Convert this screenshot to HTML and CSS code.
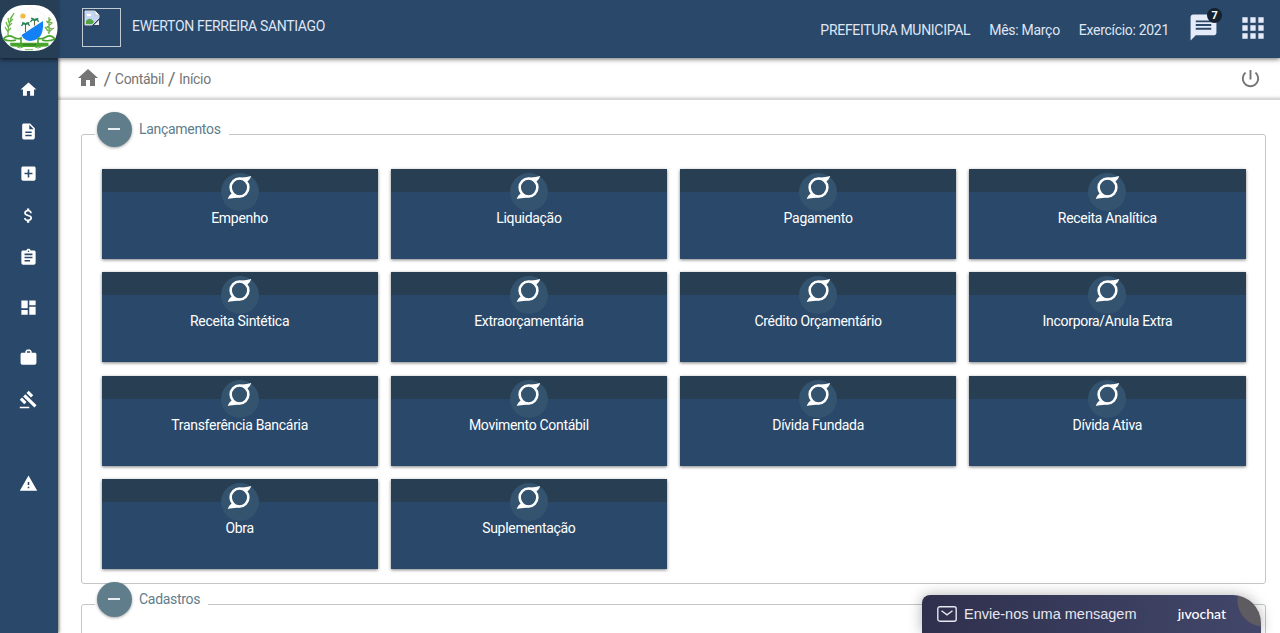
FILE: index.html
```html
<!DOCTYPE html>
<html lang="pt-BR">
<head>
<meta charset="utf-8">
<title>Contábil</title>
<link rel="stylesheet" href="styles.css">
</head>
<body>
<svg class="defs" width="0" height="0">
  <symbol id="ring" viewBox="0 0 26 26"><ellipse cx="13" cy="13" rx="9.200" ry="9.400" fill="none" stroke="#fff" stroke-width="2.700"/><path fill="#fff" d="M9 4.200C12 2 19 2.800 25.200 1 24.400 3.600 22.600 5.800 20.600 7.200 18 5 14 3.600 9 4.200zM17 21.800C14 24 7 23.200.8 25 1.600 22.400 3.400 20.200 5.400 18.800 8 21 12 22.400 17 21.800z"/></symbol>
  <symbol id="home" viewBox="0 0 24 24"><path d="M10 20v-6h4v6h5v-8h3L12 3 2 12h3v8z"/></symbol>
</svg>
<div class="app">
  <header class="topbar">
    <div class="brand">
      <svg width="58" height="52" viewBox="0 0 58 52">
        <rect x="1" y="1" width="56.500" height="46" rx="23" ry="22" fill="#fff"/>
        <path d="M20 9l11-6 13 7v19L31 40 20 31z" fill="#fdfdfd" stroke="#ececec" stroke-width=".5"/>
        <circle cx="23" cy="12" r="2.600" fill="#f4b942"/>
        <path d="M43 17Q44 30 38 34.500Q32 38.500 26 36Q22.500 34 21.500 31z" fill="#1480f5"/>
        <path d="M25.500 20v8M34.500 16v5.500" stroke="#6b6b3a" stroke-width="1.100" fill="none"/>
        <path d="M21.500 22q2-3.500 4-1.500q3-2 4 1.500M22 19q3-.5 3.500 1.500q1.500-2.500 4-1.500M30.500 18q2-3.500 4-1.500q3-2 4 1.500M31 14.500q3-.5 3.500 2q1.500-2.500 4-1.500" stroke="#238052" stroke-width="1.300" fill="none"/>
        <path d="M14 9Q8 18 8 31M13 11l-3 4M13 15l-4 4M12 19l-4 4M11 24l-3 3M8 14l1 5M6 18l2 5M5 23l3 5" stroke="#6bb94a" stroke-width="1.300" fill="none"/>
        <path d="M49 13v17M46 17l6 2-5 4 5 2-4 4M51 15l-4 4M54 24l-5 3M45 23l3 4" stroke="#72b14a" stroke-width="1.300" fill="none"/>
        <path d="M3 35q5-5 10-2q5 3 8 1v5M55 35q-4-5-9-2q-5 3-8 1v5M3 35q6 3 13 1M55 35q-6 3-13 1" stroke="#48a52b" stroke-width="1.600" fill="none"/>
        <path d="M10 38.700h38.500v3.300q-3 1-19 1t-19-1z" fill="#48a52b"/>
        <path d="M23 40.800h13" stroke="#2d7420" stroke-width="1"/>
        <path d="M17 43q3 2 6 0M35 43q3 2 6 0M25 45.700h8" stroke="#6fb955" fill="none"/>
      </svg>
    </div>
    <div class="avatar">
      <svg width="16" height="16" viewBox="0 0 16 16"><path d="M1 1h10l4 4v3L8 15H1z" fill="#c3d7f4" stroke="#d3d6da"/><path d="M11 1v4h4" fill="#fff" stroke="#c3c7cb"/><path d="M2 14v-3q4-5 8 1l-2 2z" fill="#54a43f"/><ellipse cx="5" cy="5" rx="2.300" ry="1.300" fill="#fff"/><path d="M15 10v5h-5z" fill="#e8eaec"/></svg>
    </div>
    <div class="user">EWERTON FERREIRA SANTIAGO</div>
    <div class="info"><span>PREFEITURA MUNICIPAL</span><span>Mês: Março</span><span>Exercício: 2021</span></div>
    <div class="chat">
      <svg width="31" height="31" viewBox="0 0 24 24"><path fill="#e6ebfa" d="M20 2H4c-1.100 0-2 .9-2 2v18l4-4h14c1.100 0 2-.9 2-2V4c0-1.100-.9-2-2-2zM6 6.500h12v1.500H6zM6 9.300h12v1.500H6zM6 12.200h12v1.500H6z" fill-rule="evenodd"/></svg>
      <span class="badge">7</span>
    </div>
    <svg class="apps" width="32" height="32" viewBox="0 0 24 24"><path fill="#e6ebfa" d="M4 8h4V4H4zM10 20h4v-4h-4zM4 20h4v-4H4zM4 14h4v-4H4zM10 14h4v-4h-4zM16 4v4h4V4zM10 8h4V4h-4zM16 14h4v-4h-4zM16 20h4v-4h-4z"/></svg>
  </header>
  <nav class="side">
    <svg viewBox="0 0 24 24"><use href="#home"/></svg>
    <svg viewBox="0 0 24 24"><path d="M14 2H6c-1.100 0-2 .9-2 2v16c0 1.100.9 2 2 2h12c1.100 0 2-.9 2-2V8zM16 18H8v-2h8zM16 14H8v-2h8zM13 9V3.500L18.500 9z"/></svg>
    <svg viewBox="0 0 24 24"><path d="M19 3H5c-1.100 0-2 .9-2 2v14c0 1.100.9 2 2 2h14c1.100 0 2-.9 2-2V5c0-1.100-.9-2-2-2zM17 13h-4v4h-2v-4H7v-2h4V7h2v4h4z"/></svg>
    <svg viewBox="0 0 24 24"><path d="M11.800 10.900c-2.270-.59-3-1.200-3-2.150 0-1.090 1.010-1.850 2.700-1.850 1.780 0 2.440.85 2.500 2.100h2.210c-.07-1.720-1.120-3.300-3.210-3.810V3h-3v2.160c-1.940.42-3.500 1.680-3.500 3.610 0 2.310 1.910 3.460 4.700 4.130 2.500.6 3 1.480 3 2.410 0 .69-.49 1.790-2.700 1.790-2.060 0-2.870-.92-2.980-2.100h-2.200c.12 2.190 1.760 3.420 3.680 3.830V21h3v-2.150c1.950-.37 3.500-1.500 3.500-3.550 0-2.840-2.430-3.810-4.700-4.400z"/></svg>
    <svg viewBox="0 0 24 24"><path d="M19 3h-4.180C14.400 1.840 13.300 1 12 1s-2.400.84-2.820 2H5c-1.100 0-2 .9-2 2v14c0 1.100.9 2 2 2h14c1.100 0 2-.9 2-2V5c0-1.100-.9-2-2-2zM12 3c.55 0 1 .45 1 1s-.45 1-1 1-1-.45-1-1 .45-1 1-1zM14 17H7v-2h7zM17 13H7v-2h10zM17 9H7V7h10z"/></svg>
    <svg class="wide" viewBox="0 0 24 24"><path d="M3 13h8V3H3zM3 21h8v-6H3zM13 21h8V11h-8zM13 3v6h8V3z"/></svg>
    <svg class="wide" viewBox="0 0 24 24"><path d="M20 6h-4V4l-2-2h-4L8 4v2H4c-1.100 0-2 .9-2 2v11c0 1.100.9 2 2 2h16c1.100 0 2-.9 2-2V8c0-1.100-.9-2-2-2zM14 6h-4V4h4z"/></svg>
    <svg viewBox="0 0 24 24"><path d="M1 21h12v2H1zM5.240 8.070l2.830-2.830 14.140 14.140-2.830 2.830zM12.320 1l5.660 5.660-2.830 2.830-5.660-5.660zM3.830 9.480l5.660 5.660-2.830 2.830L1 12.310z"/></svg>
    <svg class="last" viewBox="0 0 24 24"><path d="M1 21h22L12 2zM13 18h-2v-2h2zM13 14h-2v-4h2z"/></svg>
  </nav>
  <div class="crumbs">
    <svg class="chome" width="24" height="24" viewBox="0 0 24 24"><use href="#home"/></svg>
    <span class="slash">/</span><span class="crumb">Contábil</span><span class="slash">/</span><span class="crumb">Início</span>
    <svg class="power" width="23" height="23" viewBox="0 0 24 24"><path d="M13 3h-2v10h2zM17.830 5.170l-1.420 1.420C17.990 7.860 19 9.810 19 12c0 3.870-3.130 7-7 7s-7-3.130-7-7c0-2.190 1.010-4.140 2.580-5.420L6.170 5.170C4.230 6.820 3 9.260 3 12c0 4.970 4.030 9 9 9s9-4.030 9-9c0-2.740-1.230-5.180-3.170-6.830z"/></svg>
  </div>
  <main class="content">
    <section class="group">
      <h2 class="legend"><i class="toggle"></i>Lançamentos</h2>
      <div class="cards">
        <a class="card"><span class="dot"><svg><use href="#ring"/></svg></span>Empenho</a>
        <a class="card"><span class="dot"><svg><use href="#ring"/></svg></span>Liquidação</a>
        <a class="card"><span class="dot"><svg><use href="#ring"/></svg></span>Pagamento</a>
        <a class="card"><span class="dot"><svg><use href="#ring"/></svg></span>Receita Analítica</a>
        <a class="card"><span class="dot"><svg><use href="#ring"/></svg></span>Receita Sintética</a>
        <a class="card"><span class="dot"><svg><use href="#ring"/></svg></span>Extraorçamentária</a>
        <a class="card"><span class="dot"><svg><use href="#ring"/></svg></span>Crédito Orçamentário</a>
        <a class="card"><span class="dot"><svg><use href="#ring"/></svg></span>Incorpora/Anula Extra</a>
        <a class="card"><span class="dot"><svg><use href="#ring"/></svg></span>Transferência Bancária</a>
        <a class="card"><span class="dot"><svg><use href="#ring"/></svg></span>Movimento Contábil</a>
        <a class="card"><span class="dot"><svg><use href="#ring"/></svg></span>Dívida Fundada</a>
        <a class="card"><span class="dot"><svg><use href="#ring"/></svg></span>Dívida Ativa</a>
        <a class="card"><span class="dot"><svg><use href="#ring"/></svg></span>Obra</a>
        <a class="card"><span class="dot"><svg><use href="#ring"/></svg></span>Suplementação</a>
      </div>
    </section>
    <section class="group next">
      <h2 class="legend"><i class="toggle"></i>Cadastros</h2>
    </section>
  </main>
</div>
<div class="jivo">
  <svg width="20" height="16" viewBox="0 0 20 16"><rect x=".8" y=".8" width="18.400" height="14.400" rx="2" fill="none" stroke="#e6e7f0" stroke-width="1.400"/><path d="M4.500 4.800l5.500 4 5.500-4" fill="none" stroke="#e6e7f0" stroke-width="1.400"/></svg>
  <span class="msg">Envie-nos uma mensagem</span>
  <span class="logo">jıvochat</span>
</div>
</body>
</html>
```
FILE: styles.css
```css
* { box-sizing: border-box; }
body { margin: 0; height: 633px; overflow: hidden; background: #fff; font: 14px Roboto, sans-serif; letter-spacing: -.3px; }
.defs { position: absolute; }
.app { display: grid; grid-template: 58px 42px 533px / 58px 1fr; height: 633px; overflow: hidden; }

.topbar { grid-column: 1 / 3; display: flex; background: #2a4869; color: #dfe6f5; box-shadow: 0 1px 5px rgba(0,0,0,.6); z-index: 3; }
.brand { width: 58px; height: 58px; padding-top: 4px; background: #273f55; box-shadow: 0 0 4px rgba(0,0,0,.3); }
.avatar { width: 39px; height: 39px; margin: 8px 0 0 24px; border: 1px solid #c3cad2; padding: 1px; }
.user { margin: 17px auto 0 11px; line-height: 18px; letter-spacing: -.33px; }
.info { display: flex; gap: 19px; margin-top: 21px; line-height: 18px; }
.chat { position: relative; margin: 12px 0 0 19px; width: 31px; height: 31px; }
.badge { position: absolute; left: 19px; top: -4px; width: 15px; height: 15px; border-radius: 50%; background: #14212e; color: #fff; font-size: 11px; font-weight: 700; line-height: 15px; text-align: center; }
.apps { margin: 12px 11px 0 18px; }

.side { grid-row: 2 / 4; display: flex; flex-direction: column; align-items: center; padding: 21.500px 1px 0 0; background: #2a4869; box-shadow: 1px 0 3px rgba(0,0,0,.6); z-index: 2; }
.side svg { width: 19px; height: 19px; margin-bottom: 23px; fill: #fff; flex: none; }
.side svg:nth-child(5), .side .wide { margin-bottom: 31px; }
.side .wide + .wide { margin-bottom: 23px; }
.side .last { margin-top: 42px; }

.crumbs { display: flex; align-items: center; padding: 0 18px; color: #757575; border-bottom: 2px solid #d8d8d8; box-shadow: inset 0 -3px 3px -2px rgba(0,0,0,.13); }
.crumbs svg { fill: #757575; }
.crumb { padding-top: 2px; }
.slash { font-size: 19px; margin: 0 3.800px 0 3.500px; }
.power { margin-left: auto; }

.content { padding: 34px 14px 0 23px; min-width: 0; overflow: hidden; }
.group { height: 450px; border: 1px solid #c2c6c8; border-radius: 3px; padding: 0 19.500px; }
.next { margin-top: 20px; }
.legend { display: flex; align-items: center; gap: 7.500px; width: max-content; height: 35px; margin: -23.500px 0 0 -6.500px; padding: 0 8px 0 1.500px; background: linear-gradient(#fff, #fff) 0 20px / 100% 8px no-repeat; font-size: 14px; font-weight: 400; color: #607d8b; }
.toggle { display: flex; align-items: center; justify-content: center; width: 35px; height: 35px; border-radius: 50%; background: #607d8b; box-shadow: 0 1px 3px rgba(0,0,0,.35); }
.toggle::before { content: ""; width: 12px; height: 2px; background: #e6edf0; }
.cards { display: grid; grid-template-columns: repeat(4, 1fr); grid-auto-rows: 90px; gap: 13.5px 13px; margin-top: 22px; }
.card { display: flex; flex-direction: column; align-items: center; padding-top: 4px; color: #fff; line-height: 18px; background: linear-gradient(#283e52 23px, #2a4869 23px); box-shadow: 0 1px 3px rgba(0,0,0,.5); }
.dot { width: 38px; height: 38px; border-radius: 50%; background: #34536f; display: flex; justify-content: center; padding-top: 2px; margin-bottom: -2px; }
.dot svg { width: 25px; height: 25px; }

.jivo { position: absolute; z-index: 5; left: 922px; top: 595px; width: 339px; height: 38px; display: flex; align-items: center; padding: 0 35px 0 15px; overflow: hidden; letter-spacing: 0; border-radius: 8px 28px 0 0; background: radial-gradient(circle at 342px 5px, #5f5c61 26px, transparent 27px), linear-gradient(95deg, #2f304d, #42476a); color: #e6e7f0; box-shadow: 0 0 14px rgba(0,0,0,.3); }
.msg { margin: 0 0 0 7px; font: 14.5px "Liberation Sans", sans-serif; }
.logo { margin: -2px 0 0 auto; font: 500 14px Lato, sans-serif; color: #fff; }
```
